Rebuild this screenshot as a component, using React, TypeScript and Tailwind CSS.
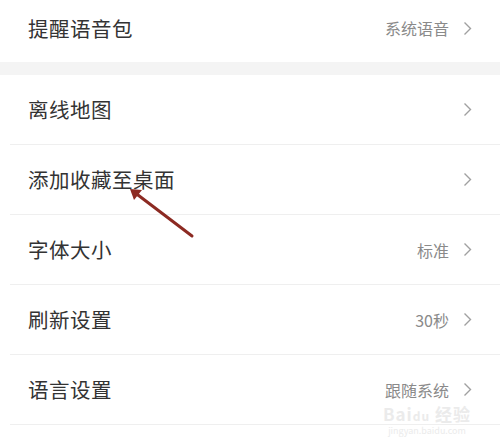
type Item = { label: string; value?: string };

const items: Item[] = [
  { label: "离线地图" },
  { label: "添加收藏至桌面" },
  { label: "字体大小", value: "标准" },
  { label: "刷新设置", value: "30秒" },
  { label: "语言设置", value: "跟随系统" },
];

const font = { fontFamily: '"Noto Sans CJK SC", "Noto Sans", sans-serif' };

const Chevron = () => (
  <svg width="9" height="15" viewBox="0 0 9 15" className="text-[#a0a0a0]">
    <polyline points="1.5,1.5 7.5,7.5 1.5,13.5" fill="none" stroke="currentColor" strokeWidth="1.4" />
  </svg>
);

const Row = ({ item, first }: { item: Item; first?: boolean }) => (
  <div
    className={`flex items-center justify-between pr-[28px] ${
      first ? "h-[62px] pb-[6px] pl-[28px]" : "h-[70px] ml-[10px] pl-[18px] border-b border-[#efefef]"
    }`}
  >
    <span className="text-[20.5px] text-[#333333] tracking-[0.5px]">{item.label}</span>
    <div className="flex items-center gap-[14px]">
      {item.value && <span className="text-[16px] leading-[20px] text-[#8a8a8a]">{item.value}</span>}
      <Chevron />
    </div>
  </div>
);

export default function App() {
  return (
    <div className="relative w-[500px] h-[440px] bg-white overflow-hidden" style={font}>
      <Row item={{ label: "提醒语音包", value: "系统语音" }} first />
      <div className="h-[13px] bg-[#f4f4f4]" />
      {items.map((item) => (
        <Row key={item.label} item={item} />
      ))}

      {/* красная стрелка поверх */}
      <svg className="absolute left-0 top-0" width="500" height="440">
        <line x1="192" y1="236" x2="134" y2="192" stroke="#8c2a22" strokeWidth="3" strokeLinecap="round" />
        <polygon points="130,189 142,190 134,200" fill="#8c2a22" />
      </svg>

      {/* водяной знак */}
      <div className="absolute left-[383px] top-[405px] flex flex-col items-center leading-none text-[#ebebeb]">
        <span className="text-[17px] font-bold tracking-[1px]">Bai<span className="text-[12px]">du</span> 经验</span>
        <span className="text-[9px] mt-[4px]">jingyan.baidu.com</span>
      </div>
    </div>
  );
}
